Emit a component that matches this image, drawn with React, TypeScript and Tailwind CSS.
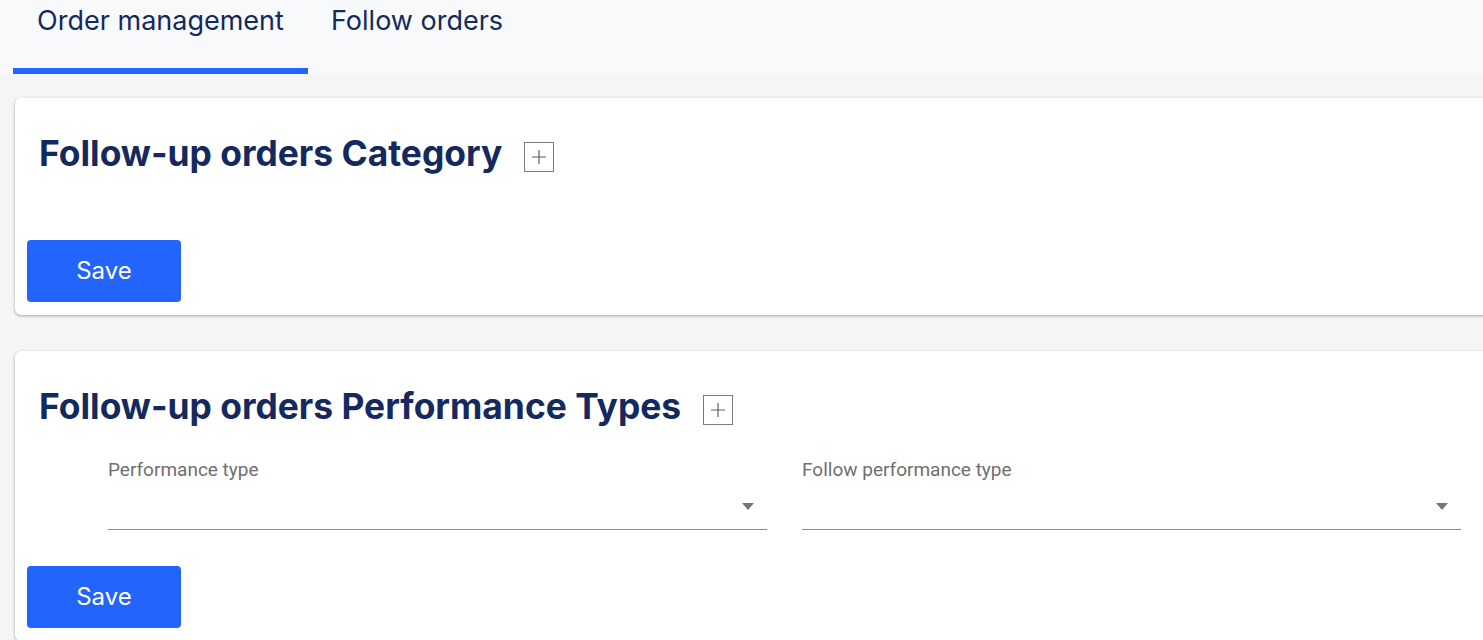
import React from 'react';

const PlusBox: React.FC = () => (
  <span className="inline-flex items-center justify-center w-[30px] h-[30px] border border-[#7a7a7a] ml-[22px] mt-[5px]">
    <svg width="16" height="16" viewBox="0 0 16 16">
      <path d="M8 1v14M1 8h14" stroke="#5f5f5f" strokeWidth="1.2" />
    </svg>
  </span>
);

const SaveButton: React.FC = () => (
  <button className="w-[154px] h-[62px] rounded-[4px] bg-[#2264fc] text-white text-[24px] font-['Inter',sans-serif]">
    Save
  </button>
);

const SelectField: React.FC<{ label: string }> = ({ label }) => (
  <div className="w-[659px] font-['Roboto',sans-serif]">
    <div className="text-[19px] leading-[22px] text-[#6f6f6f]">{label}</div>
    <div className="h-[49px] border-b border-[#8a8a8a] flex items-center justify-end pr-[13px] pt-[2px]">
      <svg width="12" height="7" viewBox="0 0 12 7">
        <path d="M0 0h12L6 7z" fill="#757575" />
      </svg>
    </div>
  </div>
);

const App: React.FC = () => {
  return (
    <div className="min-h-screen bg-[#f4f5f7] overflow-hidden font-['Inter',sans-serif]">
      <nav className="bg-[#f8f9fb] h-[74px] flex pl-[13px]">
        <div className="w-[295px] flex flex-col">
          <div className="flex-1 pt-[1px] text-center text-[27px] text-[#14295e]">Order management</div>
          <div className="h-[6px] bg-[#2264fc]" />
        </div>
        <div className="pl-[23px] pt-[1px] text-[27px] text-[#14295e]">Follow orders</div>
      </nav>

      <div className="pl-[15px] mr-[-30px] pt-[24px] flex flex-col gap-[36px]">
        <section className="bg-white rounded-[6px] shadow-[0_1px_3px_rgba(0,0,0,0.35)] pt-[34px] pb-[13px] pl-[12px]">
          <h2 className="flex items-center pl-[12px] text-[35.4px] leading-[44px] font-bold text-[#14295e]">
            Follow-up orders Category
            <PlusBox />
          </h2>
          <div className="mt-[64px]">
            <SaveButton />
          </div>
        </section>

        <section className="bg-white rounded-[6px] shadow-[0_1px_3px_rgba(0,0,0,0.35)] pt-[34px] pb-[13px] pl-[12px]">
          <h2 className="flex items-center pl-[12px] text-[35.4px] leading-[44px] font-bold text-[#14295e]">
            Follow-up orders Performance Types
            <PlusBox />
          </h2>
          <div className="flex gap-[35px] pl-[81px] mt-[30px]">
            <SelectField label="Performance type" />
            <SelectField label="Follow performance type" />
          </div>
          <div className="mt-[36px]">
            <SaveButton />
          </div>
        </section>
      </div>
    </div>
  );
};

export default App;
